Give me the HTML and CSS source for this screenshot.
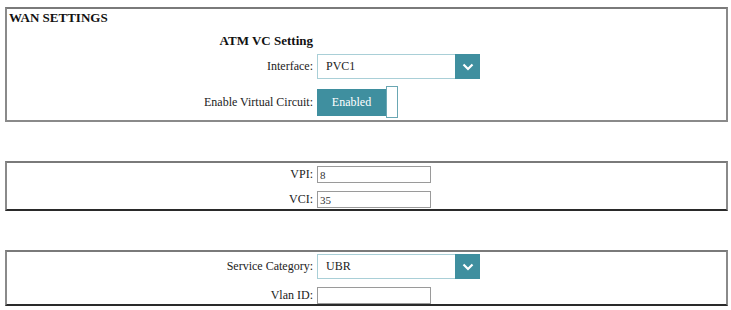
FILE: index.html
```html
<!DOCTYPE html>
<html>
<head>
    <title>WAN Settings</title>
    <link rel="stylesheet" href="styles.css">
</head>
<body>
    <div class="page">
        <div class="box box-main">
            <div class="box-title">WAN SETTINGS</div>
            <div class="form">
                <div class="label heading">ATM VC Setting</div>
                <div></div>

                <div class="label">Interface:</div>
                <div class="select">
                    <span class="select-text">PVC1</span>
                    <span class="select-arrow">
                        <svg viewBox="0 0 12 8" width="12" height="8" fill="none" stroke="#fff" stroke-width="2.2">
                            <polyline points="1.5 1.5 6 6 10.5 1.5" />
                        </svg>
                    </span>
                </div>

                <div class="label">Enable Virtual Circuit:</div>
                <div class="toggle">
                    <span class="toggle-btn">Enabled</span>
                    <span class="toggle-end"></span>
                </div>
            </div>
        </div>

        <div class="box box-small">
            <div class="form">
                <div class="label">VPI:</div>
                <div><input class="text" type="text" value="8"></div>
                <div class="label">VCI:</div>
                <div><input class="text" type="text" value="35"></div>
            </div>
        </div>

        <div class="box box-small box-last">
            <div class="form">
                <div class="label">Service Category:</div>
                <div class="select">
                    <span class="select-text">UBR</span>
                    <span class="select-arrow">
                        <svg viewBox="0 0 12 8" width="12" height="8" fill="none" stroke="#fff" stroke-width="2.2">
                            <polyline points="1.5 1.5 6 6 10.5 1.5" />
                        </svg>
                    </span>
                </div>
                <div class="label">Vlan ID:</div>
                <div><input class="text" type="text" value=""></div>
            </div>
        </div>
    </div>
</body>
</html>
```

FILE: styles.css
```css
body {
    margin: 0;
    background: #ffffff;
    font-family: "Liberation Serif", "Times New Roman", serif;
    font-size: 12px;
    color: #222;
}

.page {
    padding: 7px 3px 0 5px;
}

.box {
    border: 2px solid #8a8a8a;
    border-top-color: #7a7a7a;
    background: #fff;
}

.box-main {
    height: 111px;
}

.box-small {
    margin-top: 39px;
    border-bottom-color: #2a2a2a;
    padding: 3px 0 1px;
}

.box-last {
    margin-top: 39px;
    padding: 2px 0 0;
}

.box-title {
    font-weight: bold;
    font-size: 13px;
    color: #111;
    padding: 1px 0 0 2px;
    line-height: 15px;
}

.form {
    display: grid;
    grid-template-columns: 306px 1fr;
    column-gap: 4px;
    row-gap: 7px;
    align-items: center;
}

.box-main .form {
    margin-top: 8px;
}

.label {
    text-align: right;
    white-space: nowrap;
    color: #222;
}

.heading {
    font-weight: bold;
    font-size: 13px;
    color: #111;
    line-height: 15px;
    margin-bottom: -1px;
}

.select {
    display: flex;
    width: 163px;
    height: 25px;
    box-sizing: border-box;
    border: 1px solid #a9cfd7;
    background: #fff;
}

.select-text {
    flex: 1;
    padding-left: 8px;
    line-height: 23px;
    color: #222;
}

.select-arrow {
    width: 25px;
    margin: -1px -1px -1px 0;
    background: #3f8f9f;
    display: flex;
    align-items: center;
    justify-content: center;
}

.toggle {
    display: flex;
    align-items: center;
    height: 32px;
}

.toggle-btn {
    width: 69px;
    height: 27px;
    background: #3f8f9f;
    color: #fff;
    text-align: center;
    line-height: 27px;
}

.toggle-end {
    width: 12px;
    height: 32px;
    box-sizing: border-box;
    border: 1px solid #6aa7b3;
    background: #fff;
}

.text {
    width: 114px;
    height: 17px;
    box-sizing: border-box;
    border: 1px solid #9a9a9a;
    padding: 0 2px;
    margin: 0;
    font-family: "Liberation Serif", "Times New Roman", serif;
    font-size: 11px;
    color: #333;
    display: block;
}

.box-small .form {
    row-gap: 8px;
}
```
